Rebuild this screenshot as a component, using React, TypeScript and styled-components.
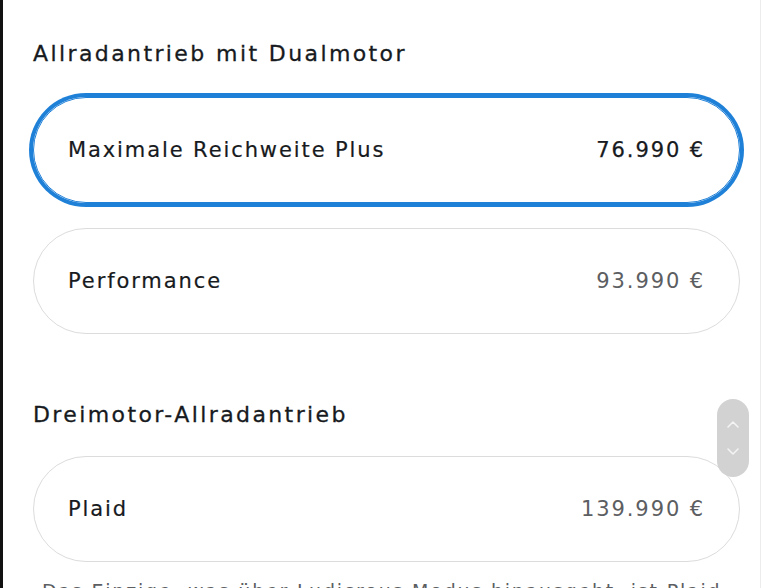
import React from "react";
import styled, { createGlobalStyle } from "styled-components";

const Global = createGlobalStyle`
  html, body { margin: 0; padding: 0; background: #ffffff; overflow: hidden; }
  * { box-sizing: border-box; }
`;

const Frame = styled.div`
  position: relative;
  width: 761px;
  height: 588px;
  overflow: hidden;
  border-left: 3px solid #111111;
  border-right: 1px solid #ececec;
  background: #ffffff;
  font-family: "DejaVu Sans", "Liberation Sans", sans-serif;
  color: #171a20;
`;

const Content = styled.div`
  display: flex;
  flex-direction: column;
  padding: 39px 20px 0 30px;
`;

const Heading = styled.h2<{ $top?: number }>`
  margin: ${(p) => p.$top ?? 0}px 0 0 0;
  font-size: 22px;
  line-height: 30px;
  font-weight: 400;
  letter-spacing: 2.4px;
  color: #171a20;
  -webkit-text-stroke: 0.3px #171a20;
`;

const OptionList = styled.div<{ $top: number }>`
  display: flex;
  flex-direction: column;
  gap: 25px;
  margin-top: ${(p) => p.$top}px;
`;

const Option = styled.div<{ $selected?: boolean }>`
  display: flex;
  align-items: center;
  justify-content: space-between;
  width: 707px;
  height: 106px;
  padding: 0 34px 0 34px;
  border-radius: 53px;
  border: 1.5px solid ${(p) => (p.$selected ? "#1f80d8" : "#dcdcdc")};
  box-shadow: ${(p) => (p.$selected ? "0 0 0 4px #1f80d8" : "none")};
`;

const Label = styled.span`
  font-size: 21px;
  font-weight: 400;
  letter-spacing: 1.9px;
  color: #171a20;
  -webkit-text-stroke: 0.2px #171a20;
`;

const Price = styled.span<{ $selected?: boolean }>`
  font-size: 21px;
  font-weight: 400;
  letter-spacing: 1.9px;
  color: ${(p) => (p.$selected ? "#171a20" : "#5c5e62")};
  -webkit-text-stroke: ${(p) => (p.$selected ? "0.25px #171a20" : "0")};
`;

const Footnote = styled.p`
  margin: 15px 0 0 9px;
  font-size: 19px;
  line-height: 28px;
  letter-spacing: 1.8px;
  color: #5c5e62;
  white-space: nowrap;
`;

const Scroller = styled.div`
  position: absolute;
  left: 714px;
  top: 399px;
  width: 32px;
  height: 78px;
  border-radius: 16px;
  background: #d2d2d2;
  display: flex;
  flex-direction: column;
  align-items: center;
  justify-content: center;
  gap: 20px;
`;

const Chevron = ({ up }: { up?: boolean }) => (
  <svg width="12" height="7" viewBox="0 0 12 7">
    <path
      d={up ? "M1 6 L6 1 L11 6" : "M1 1 L6 6 L11 1"}
      fill="none"
      stroke="#f4f4f4"
      strokeWidth="1.5"
      strokeLinecap="round"
      strokeLinejoin="round"
    />
  </svg>
);

const options1 = [
  { label: "Maximale Reichweite Plus", price: "76.990 €", selected: true },
  { label: "Performance", price: "93.990 €" },
];

export default function App() {
  return (
    <>
      <Global />
      <Frame>
        <Content>
          <Heading>Allradantrieb mit Dualmotor</Heading>
          <OptionList $top={28}>
            {options1.map((o) => (
              <Option key={o.label} $selected={o.selected}>
                <Label>{o.label}</Label>
                <Price $selected={o.selected}>{o.price}</Price>
              </Option>
            ))}
          </OptionList>
          <Heading $top={66}>Dreimotor-Allradantrieb</Heading>
          <OptionList $top={26}>
            <Option>
              <Label>Plaid</Label>
              <Price>139.990 €</Price>
            </Option>
          </OptionList>
          <Footnote>Das Einzige, was über Ludicrous Modus hinausgeht, ist Plaid</Footnote>
        </Content>
        <Scroller>
          <Chevron up />
          <Chevron />
        </Scroller>
      </Frame>
    </>
  );
}
